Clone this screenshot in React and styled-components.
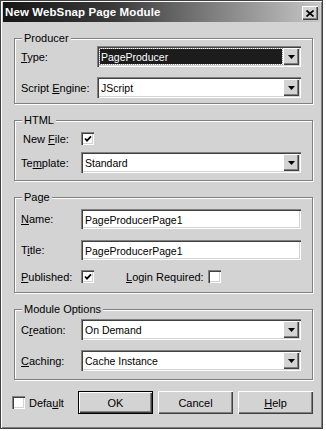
import React from 'react';
import styled, { createGlobalStyle } from 'styled-components';

// ============ CSS ============== //
const face = '#d3d3d3';

const GlobalStyle = createGlobalStyle`
  html, body { margin: 0; padding: 0; background: #fff; }
  body {
    font-family: "Liberation Sans", Arial, sans-serif;
    font-size: 11px;
    color: #000;
  }
`;

const raised = `
  box-shadow: inset 1px 1px 0 #fff, inset -1px -1px 0 #404040, inset -2px -2px 0 #808080;
`;

const sunken = `
  box-shadow: inset 1px 1px 0 #808080, inset 2px 2px 0 #404040,
    inset -1px -1px 0 #fff, inset -2px -2px 0 ${face};
`;

const Window = styled.div`
  width: 323px;
  height: 429px;
  box-sizing: border-box;
  background: ${face};
  border: 1px solid #404040;
  box-shadow: inset 1px 1px 0 #fff, inset -1px -1px 0 #808080;
  padding: 1px 2px 2px;
  display: flex;
  flex-direction: column;
`;

const TitleBar = styled.div`
  height: 20px;
  flex-shrink: 0;
  display: flex;
  align-items: center;
  justify-content: space-between;
  padding: 0 2px;
  background: linear-gradient(90deg, #161616 0%, #3a3a3a 35%, #7c7c7c 65%, #c6c6c6 100%);
  color: #fff;
  font-weight: bold;
  font-size: 11.5px;
  letter-spacing: 0.1px;
`;

const CloseBtn = styled.div`
  width: 16px;
  height: 14px;
  margin-top: 2px;
  background: ${face};
  ${raised}
  display: flex;
  align-items: center;
  justify-content: center;
`;

const Content = styled.div`
  display: flex;
  flex-direction: column;
  padding: 16px 7px 0 11px;
`;

const Group = styled.div`
  border: 1px solid #808080;
  box-shadow: inset 1px 1px 0 #fff, 1px 1px 0 #fff;
  padding: 0 11px ${p => p.pb}px 6px;
  margin-top: ${p => p.mt || 0}px;
`;

const Legend = styled.div`
  width: fit-content;
  height: 13px;
  line-height: 13px;
  margin: -7px 0 0 1px;
  padding: 0 2px;
  background: ${face};
`;

const Row = styled.div`
  display: flex;
  align-items: center;
  height: ${p => p.h}px;
  margin-top: ${p => p.mt}px;
`;

const Label = styled.span`
  width: ${p => p.w}px;
  flex-shrink: 0;
  white-space: nowrap;
  margin-left: ${p => p.ml || 0}px;
`;

const U = styled.span`
  text-decoration: underline;
`;

const Combo = styled.div`
  flex: 1;
  height: 21px;
  box-sizing: border-box;
  padding: 2px;
  display: flex;
  background: #fff;
  ${sunken}
`;

const Value = styled.div`
  flex: 1;
  display: flex;
  align-items: center;
  font-size: 10.5px;
  padding-left: ${p => (p.focused ? 1 : 2)}px;
  margin: ${p => (p.focused ? '1px' : '0')};
  background: ${p => (p.focused ? '#1c1c1c' : 'transparent')};
  color: ${p => (p.focused ? '#fff' : '#000')};
  outline: ${p => (p.focused ? '1px dotted #9a9a9a' : 'none')};
`;

const DropBtn = styled.div`
  width: 16px;
  background: ${face};
  ${raised}
  display: flex;
  align-items: center;
  justify-content: center;
`;

const Edit = styled.div`
  flex: 1;
  height: 20px;
  box-sizing: border-box;
  padding: 2px 0 0 4px;
  display: flex;
  align-items: center;
  font-size: 10.5px;
  background: #fff;
  ${sunken}
`;

const Check = styled.div`
  width: 13px;
  height: 13px;
  box-sizing: border-box;
  flex-shrink: 0;
  background: #fff;
  display: flex;
  align-items: center;
  justify-content: center;
  margin-left: ${p => p.ml || 0}px;
  ${sunken}
`;

const Footer = styled.div`
  display: flex;
  align-items: center;
  margin: 11px 0 0 -2px;
`;

const FootLabel = styled.span`
  margin-left: 4px;
`;

const BttnCont = styled.div`
  margin-left: auto;
  display: flex;
  gap: 5px;
`;

const Button = styled.div`
  width: 75px;
  height: 23px;
  box-sizing: border-box;
  display: flex;
  align-items: center;
  justify-content: center;
  background: ${face};
  border: ${p => (p.primary ? '1px solid #000' : 'none')};
  ${raised}
`;

// ============ Icons ============== //
const Arrow = () => (
  <svg width="7" height="4" viewBox="0 0 7 4">
    <polygon points="0,0 7,0 3.5,4" fill="#000" />
  </svg>
);

const Tick = () => (
  <svg width="8" height="8" viewBox="0 0 8 8">
    <polyline points="1,3.5 3,5.6 7,1.4" fill="none" stroke="#000" strokeWidth="1.8" />
  </svg>
);

const XGlyph = () => (
  <svg width="8" height="7" viewBox="0 0 8 7">
    <path d="M0.5 0.5 L7.5 6.5 M7.5 0.5 L0.5 6.5" stroke="#000" strokeWidth="1.7" />
  </svg>
);

const Select = ({ value, focused }) => (
  <Combo>
    <Value focused={focused}>{value}</Value>
    <DropBtn>
      <Arrow />
    </DropBtn>
  </Combo>
);

// ============ Function ============== //
const App = () => {
  return (
    <>
      <GlobalStyle />
      <Window>
        <TitleBar>
          <span>New WebSnap Page Module</span>
          <CloseBtn>
            <XGlyph />
          </CloseBtn>
        </TitleBar>

        <Content>
          <Group pb={5}>
            <Legend>Producer</Legend>
            <Row h={21} mt={1}>
              <Label w={76}><U>T</U>ype:</Label>
              <Select value="PageProducer" focused />
            </Row>
            <Row h={21} mt={10}>
              <Label w={76}>Script <U>E</U>ngine:</Label>
              <Select value="JScript" />
            </Row>
          </Group>

          <Group pb={7} mt={16}>
            <Legend>HTML</Legend>
            <Row h={17} mt={3}>
              <Label w={60} ml={2}>New <U>F</U>ile:</Label>
              <Check ml={-2}><Tick /></Check>
            </Row>
            <Row h={21} mt={5}>
              <Label w={60}>Te<U>m</U>plate:</Label>
              <Select value="Standard" />
            </Row>
          </Group>

          <Group pb={7} mt={16}>
            <Legend>Page</Legend>
            <Row h={21} mt={4}>
              <Label w={60}><U>N</U>ame:</Label>
              <Edit>PageProducerPage1</Edit>
            </Row>
            <Row h={21} mt={10}>
              <Label w={60}>T<U>i</U>tle:</Label>
              <Edit>PageProducerPage1</Edit>
            </Row>
            <Row h={17} mt={8}>
              <Label w={60}><U>P</U>ublished:</Label>
              <Check><Tick /></Check>
              <Label w={82} ml={32}><U>L</U>ogin Required:</Label>
              <Check />
            </Row>
          </Group>

          <Group pb={8} mt={16}>
            <Legend>Module Options</Legend>
            <Row h={21} mt={3}>
              <Label w={60}>C<U>r</U>eation:</Label>
              <Select value="On Demand" />
            </Row>
            <Row h={21} mt={10}>
              <Label w={60}><U>C</U>aching:</Label>
              <Select value="Cache Instance" />
            </Row>
          </Group>

          <Footer>
            <Check />
            <FootLabel>Defa<U>u</U>lt</FootLabel>
            <BttnCont>
              <Button primary>OK</Button>
              <Button>Cancel</Button>
              <Button><span><U>H</U>elp</span></Button>
            </BttnCont>
          </Footer>
        </Content>
      </Window>
    </>
  );
};

export default App;
